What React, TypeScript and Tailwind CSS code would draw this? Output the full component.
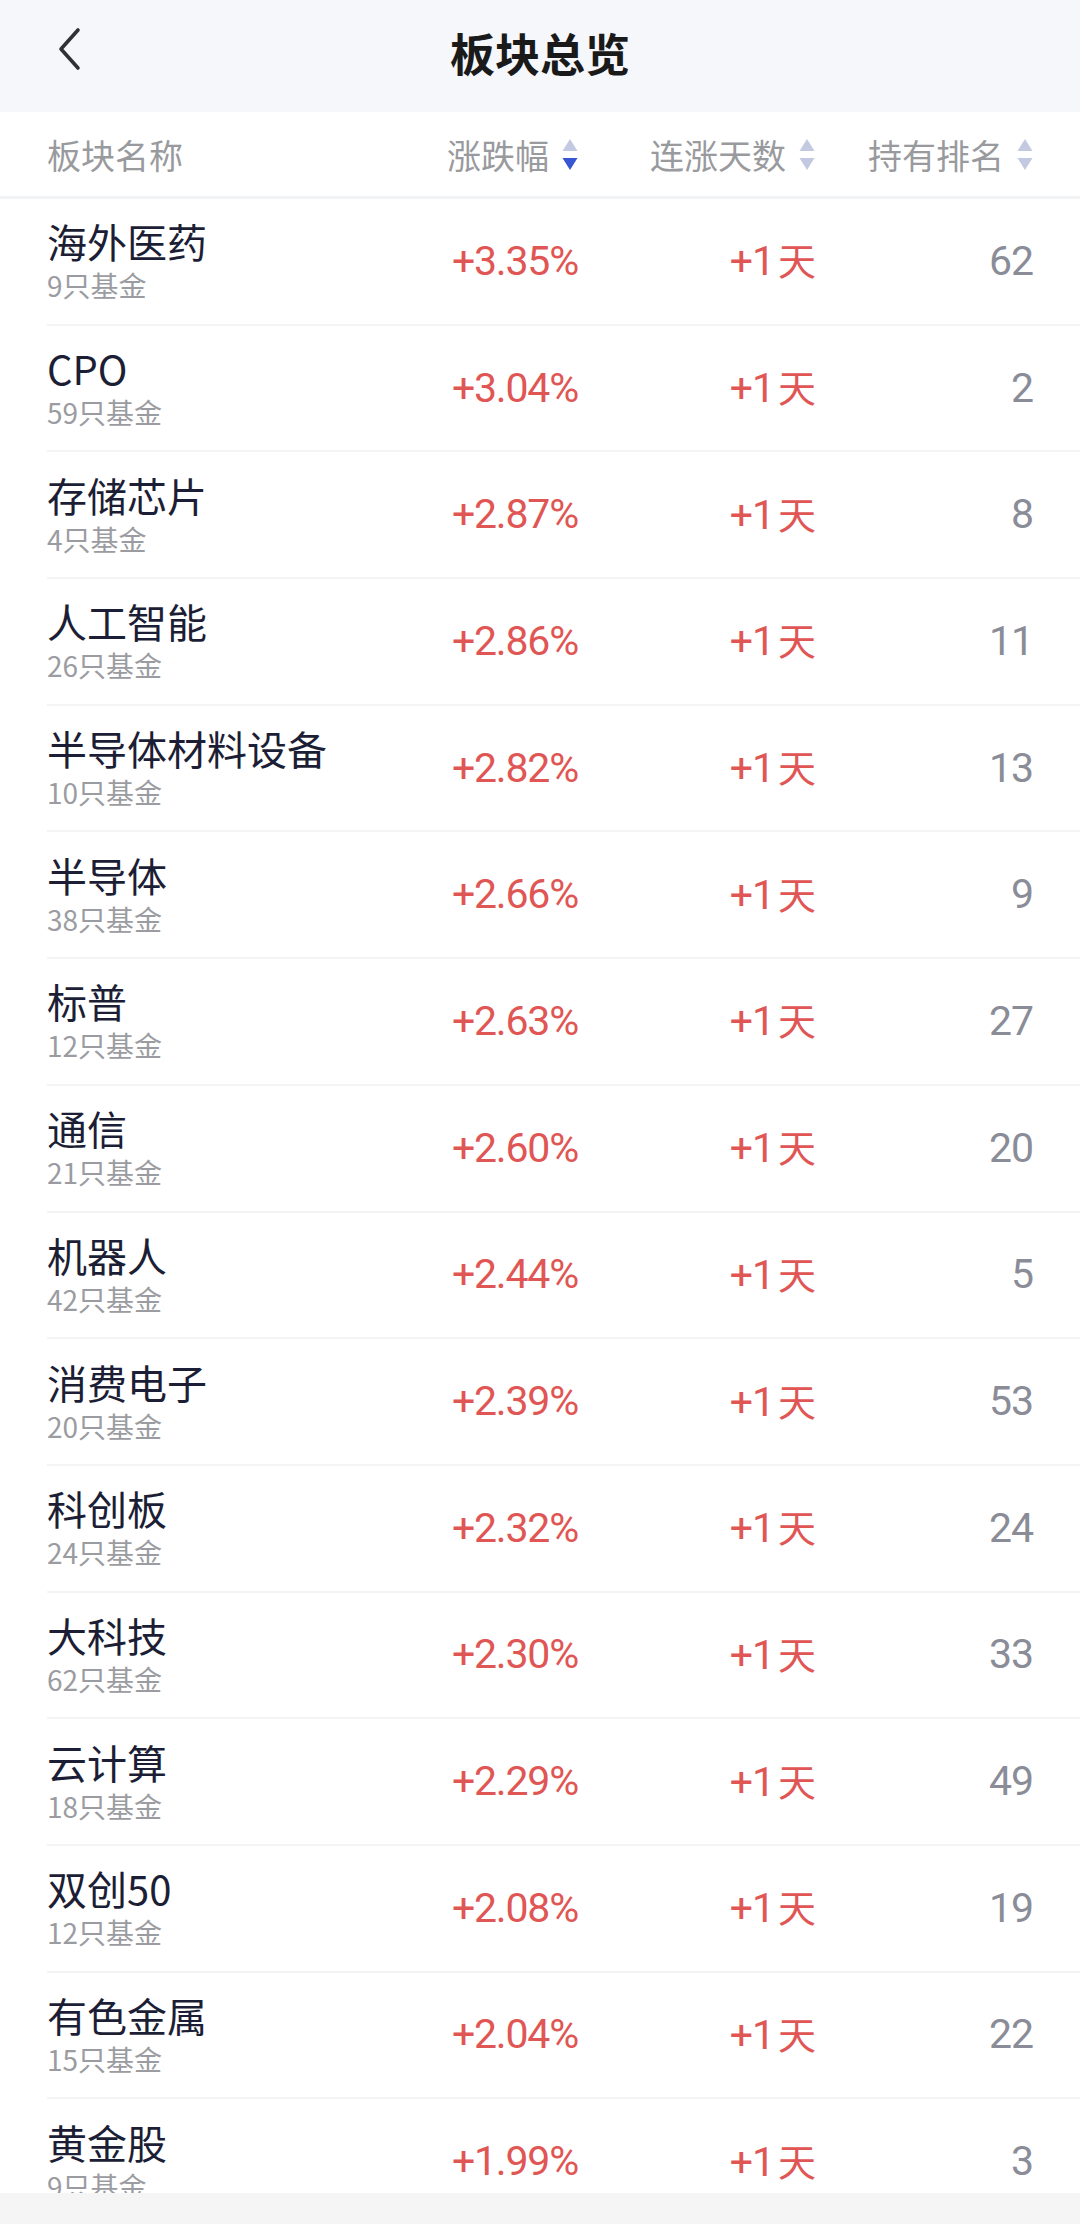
import React from 'react';

const rows = [
  { name: '海外医药', count: 9, pct: '+3.35%', rank: 62 },
  { name: 'CPO', count: 59, pct: '+3.04%', rank: 2 },
  { name: '存储芯片', count: 4, pct: '+2.87%', rank: 8 },
  { name: '人工智能', count: 26, pct: '+2.86%', rank: 11 },
  { name: '半导体材料设备', count: 10, pct: '+2.82%', rank: 13 },
  { name: '半导体', count: 38, pct: '+2.66%', rank: 9 },
  { name: '标普', count: 12, pct: '+2.63%', rank: 27 },
  { name: '通信', count: 21, pct: '+2.60%', rank: 20 },
  { name: '机器人', count: 42, pct: '+2.44%', rank: 5 },
  { name: '消费电子', count: 20, pct: '+2.39%', rank: 53 },
  { name: '科创板', count: 24, pct: '+2.32%', rank: 24 },
  { name: '大科技', count: 62, pct: '+2.30%', rank: 33 },
  { name: '云计算', count: 18, pct: '+2.29%', rank: 49 },
  { name: '双创50', count: 12, pct: '+2.08%', rank: 19 },
  { name: '有色金属', count: 15, pct: '+2.04%', rank: 22 },
  { name: '黄金股', count: 9, pct: '+1.99%', rank: 3 },
];

const cjk = "font-['Noto_Sans_CJK_SC',sans-serif]";
const num = "font-['Roboto','Noto_Sans_CJK_SC',sans-serif]";

function SortIcon({ active }: { active?: boolean }) {
  return (
    <svg width="16" height="31" viewBox="0 0 16 31" className="shrink-0">
      <path d="M8 0 L15.5 12 L0.5 12 Z" fill="#c3c9e0" />
      <path d="M0.5 19 L15.5 19 L8 31 Z" fill={active ? '#3856d1' : '#c3c9e0'} />
    </svg>
  );
}

export default function App() {
  return (
    <div className={`flex h-[2224px] w-[1080px] flex-col overflow-hidden bg-white ${cjk}`}>
      {/* Top bar */}
      <div className="relative flex h-[112px] shrink-0 items-center justify-center bg-[#f6f7fa] pb-[8px]">
        <button className="absolute left-[52px] top-[23px] p-1">
          <svg width="28" height="44" viewBox="0 0 28 44">
            <path d="M22 3 L5 22 L22 41" fill="none" stroke="#303133" strokeWidth="3.6" strokeLinecap="round" strokeLinejoin="round" />
          </svg>
        </button>
        <h1 className="text-[45px] font-bold leading-none text-[#1a1a1a]">板块总览</h1>
      </div>

      {/* Column header */}
      <div className="flex h-[87px] shrink-0 items-center border-b-[3px] border-[#f2f3f5] px-[47px] text-[34px] text-[#999a9e]">
        <div className="w-[353px]">板块名称</div>
        <div className="flex w-[178px] items-center justify-end gap-[13px]">
          <span>涨跌幅</span>
          <SortIcon active />
        </div>
        <div className="flex w-[237px] items-center justify-end gap-[13px]">
          <span>连涨天数</span>
          <SortIcon />
        </div>
        <div className="flex w-[218px] items-center justify-end gap-[13px]">
          <span>持有排名</span>
          <SortIcon />
        </div>
      </div>

      {/* List */}
      <div className="flex-1 overflow-hidden">
        {rows.map((r) => (
          <div key={r.name} className="ml-[47px] flex h-[126.7px] items-center border-b-2 border-[#f4f4f6] pr-[47px]">
            <div className="flex w-[353px] flex-col">
              <span className="text-[40px] leading-[48px] text-[#1c1e35]">{r.name}</span>
              <span className="text-[28px] leading-[40px] text-[#9b9ca1]">{r.count}只基金</span>
            </div>
            <div className={`w-[178px] text-right text-[41px] leading-none tracking-[-1.2px] text-[#df5654] ${num}`}>{r.pct}</div>
            <div className={`w-[237px] text-right text-[41px] leading-none tracking-[-1px] text-[#df5654] ${num}`}>
              +1<span className={`${cjk} ml-[4px] text-[38px]`}>天</span>
            </div>
            <div className={`w-[218px] text-right text-[41px] leading-none tracking-[-1px] text-[#8a8c98] ${num}`}>{r.rank}</div>
          </div>
        ))}
      </div>

      <div className="h-[31px] shrink-0 bg-[#f5f5f6]" />
    </div>
  );
}
